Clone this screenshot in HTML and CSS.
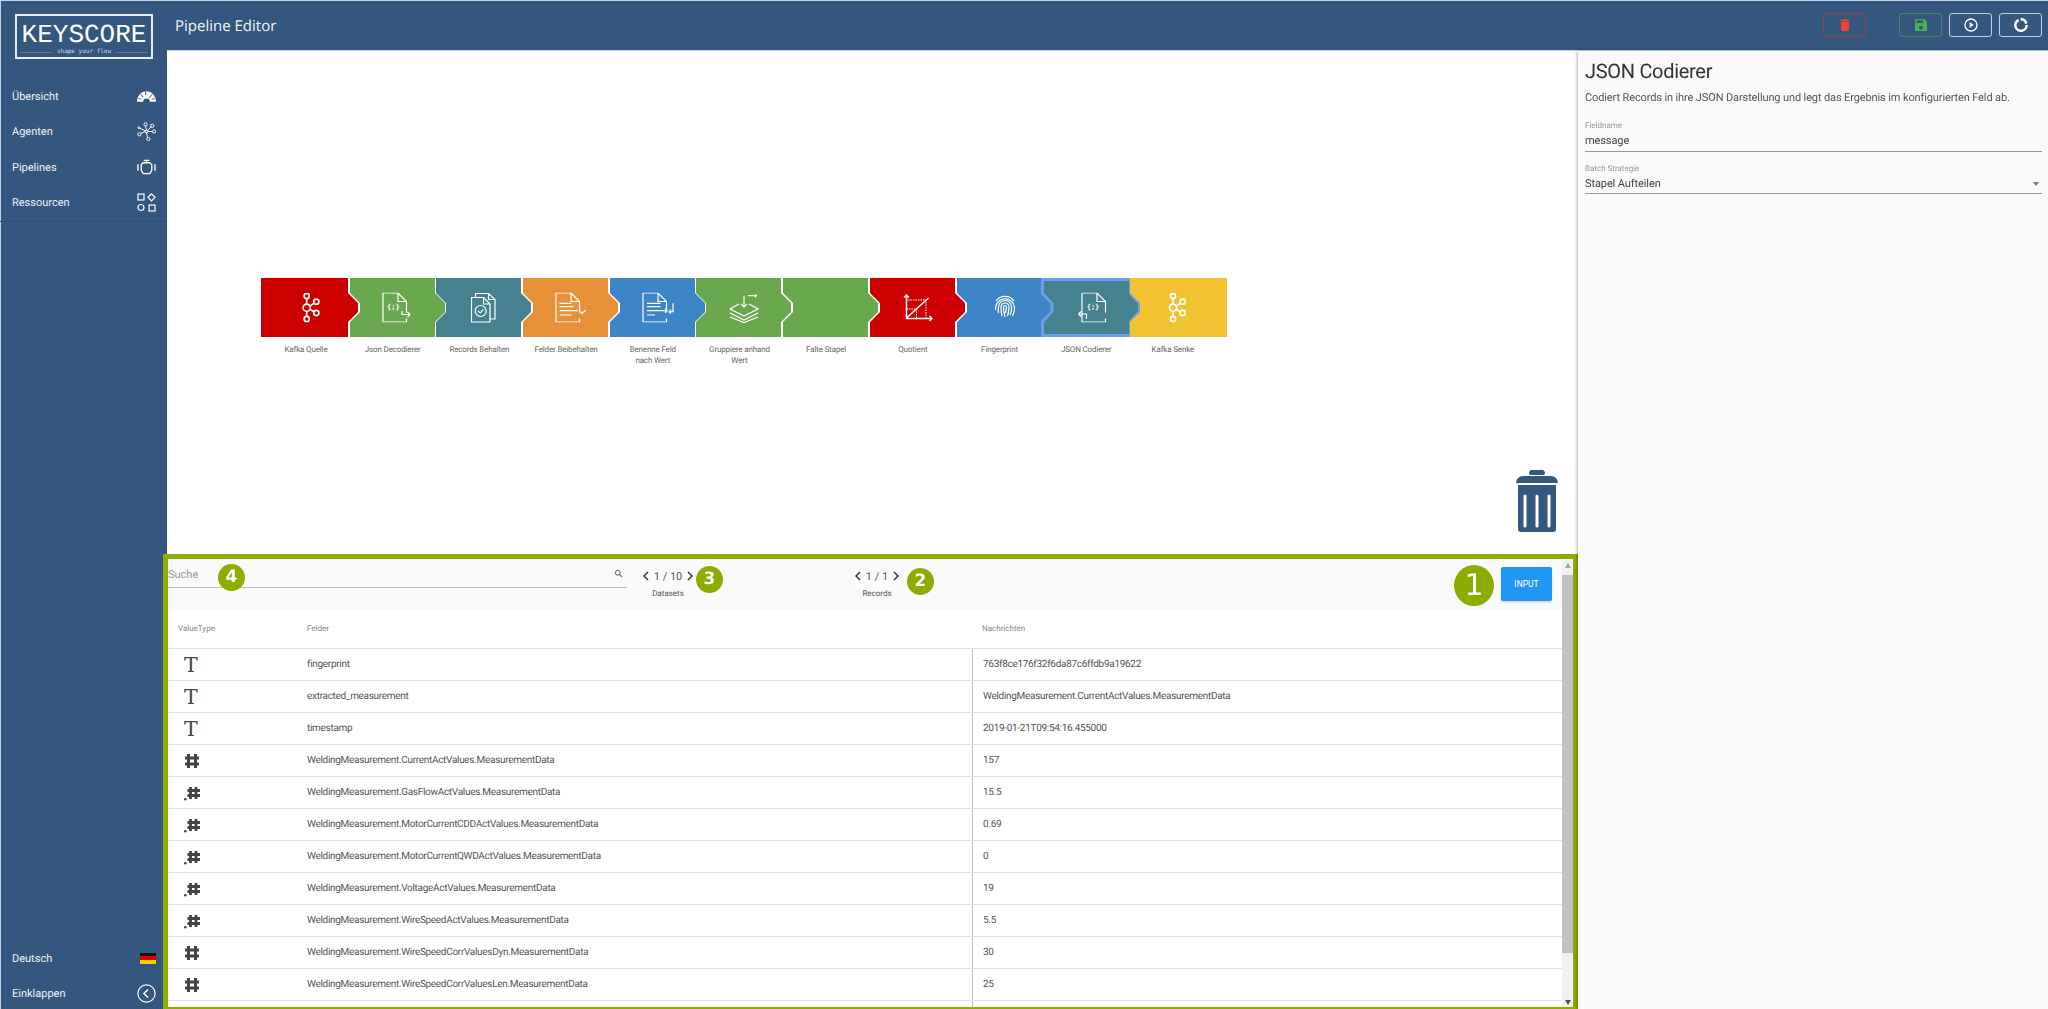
FILE: index.html
```html
<!DOCTYPE html>
<html>
<head>
  <title>Keyscore Pipeline Editor</title>
  <meta charset="UTF-8">
  <link rel="stylesheet" href="styles.css">
</head>
<body>
  <svg class="defs" xmlns="http://www.w3.org/2000/svg">
    <polygon id="mid" points="0,0 85,0 85,15 95,25 95,34 85,44 85,59 0,59 0,44 10,34 10,25 0,15"/>
    <symbol id="i-kafka" viewBox="0 0 30 30">
      <g fill="none" stroke="#fff" stroke-width="1.600">
        <path d="M11 6v5.400M11 18.600V24M14 13.500l4.500-3M14 16.500l4.500 2.500"/>
        <circle cx="11" cy="3.300" r="2.600"/>
        <circle cx="11" cy="15" r="3.600"/>
        <circle cx="11" cy="26.300" r="2.600"/>
        <circle cx="20.600" cy="9" r="2.600"/>
        <circle cx="20.600" cy="20.300" r="2.600"/>
      </g>
    </symbol>
    <symbol id="i-doc" viewBox="0 0 30 30">
      <path d="M3 .5h15l8.500 8.500v11M26.500 26v3.500H3V.5M18 .5V9h8.500" fill="none" stroke="#fff" stroke-width="1.200"/>
    </symbol>
    <symbol id="i-int" viewBox="0 0 16 16">
      <path d="M4.500 1v14M11.500 1v14M1 5h14M1 11h14" fill="none" stroke="#444" stroke-width="3"/>
    </symbol>
    <symbol id="i-float" viewBox="0 0 16 16">
      <circle cx="1.300" cy="14.300" r="1.300" fill="#444"/>
      <path d="M6.500 2v12M12 2v12M3.500 5.500H16M3.500 10.500H16" fill="none" stroke="#444" stroke-width="2.800"/>
    </symbol>
    <symbol id="i-prev" viewBox="0 0 6 10">
      <path d="M5 1L1 5l4 4" fill="none" stroke="#333" stroke-width="1.500"/>
    </symbol>
    <symbol id="i-next" viewBox="0 0 6 10">
      <path d="M1 1l4 4-4 4" fill="none" stroke="#333" stroke-width="1.500"/>
    </symbol>
  </svg>

  <div class="app">
    <aside class="sidebar">
      <div class="logo">
        <div class="logo-name">KEYSCORE</div>
        <div class="logo-tag"><span>shape your flow</span></div>
      </div>
      <nav class="nav">
        <div class="nav-row">Übersicht
          <svg class="nav-icon" viewBox="0 -4.500 20 20"><path d="M0 11C0 5 4.500 0 10 0s10 5 10 11h-6.500a3.500 3.500 0 0 0-7 0z" fill="#fff"/><path d="M4 3l2.500 3.500M1.500 7.500l3 1M16 3l-3.500 4.500M18.500 7.500l-3 1M9 0v4" stroke="#34577f" stroke-width="1"/></svg>
        </div>
        <div class="nav-row">Agenten
          <svg class="nav-icon" viewBox="0 0 20 20" fill="none" stroke="#fff" stroke-width="1"><circle cx="9" cy="2.500" r="1.700"/><circle cx="16" cy="4" r="1.700"/><circle cx="18" cy="10" r="1.700"/><circle cx="2.500" cy="13" r="1.700"/><circle cx="12" cy="18" r="1.700"/><circle cx="2" cy="6" r="1"/><circle cx="10" cy="10" r="1.500"/><path d="M9 4l1 5M15 5l-4 4M16 10h-5M4 12l5-2M11 16l-1-5M3 6.500l6 3"/></svg>
        </div>
        <div class="nav-row">Pipelines
          <svg class="nav-icon" viewBox="0 0 20 20" fill="none" stroke="#fff" stroke-width="1.400"><path d="M1 6.500v7M19 6.500v7M7 2.500h6M10 2.500V5M6.500 5h7l2 2v6l-2 3.500h-7l-2-3.500V7z"/></svg>
        </div>
        <div class="nav-row">Ressourcen
          <svg class="nav-icon" viewBox="0 0 19 19" fill="none" stroke="#fff" stroke-width="1.200"><rect x="1" y="1" width="6" height="6"/><path d="M14.500 0.800l3.500 3.500-3.500 3.500-3.500-3.500z"/><circle cx="4" cy="14.500" r="3"/><rect x="12" y="12" width="6" height="6"/></svg>
        </div>
      </nav>
      <div class="side-foot">
        <div class="nav-row">Deutsch
          <span class="flag"><i class="flag-black"></i><i class="flag-red"></i><i class="flag-gold"></i></span>
        </div>
        <div class="nav-row">Einklappen
          <svg class="nav-icon" viewBox="0 0 19 19" fill="none" stroke="#fff"><circle cx="9.500" cy="9.500" r="8.600" stroke-width="1.200"/><path d="M11 5.500l-4 4 4 4" stroke-width="1.600"/></svg>
        </div>
      </div>
    </aside>

    <div class="main">
      <header class="topbar">
        <div class="page-title">Pipeline Editor</div>
        <div class="top-actions">
          <button class="top-btn btn-red"><svg viewBox="0 0 24 24"><path d="M6 19a2 2 0 0 0 2 2h8a2 2 0 0 0 2-2V7H6zM19 4h-3.500l-1-1h-5l-1 1H5v2h14z" fill="#f44336"/></svg></button>
          <button class="top-btn btn-green"><svg viewBox="0 0 24 24"><path d="M17 3H5a2 2 0 0 0-2 2v14a2 2 0 0 0 2 2h14a2 2 0 0 0 2-2V7zm-5 16a3 3 0 1 1 0-6 3 3 0 0 1 0 6zm3-10H5V5h10z" fill="#4caf50"/></svg></button>
          <button class="top-btn"><svg viewBox="0 0 24 24"><path d="M10 7.500v9l6-4.500zM12 2a10 10 0 1 0 0 20 10 10 0 0 0 0-20zm0 18a8 8 0 1 1 0-16 8 8 0 0 1 0 16z" fill="#fff"/></svg></button>
          <button class="top-btn"><svg viewBox="0 0 24 24" fill="none" stroke="#fff" stroke-width="3.800"><path d="M8.500 4.500A8.500 8.500 0 1 0 20.500 12"/><path d="M11.500 3.500a8.500 8.500 0 0 1 8.500 6.500"/></svg></button>
        </div>
      </header>

      <div class="content">
        <section class="editor">
          <div class="canvas">
            <div class="pipeline">
              <div class="node">
                <svg class="shape" viewBox="0 0 97 59"><polygon class="red" points="0,0 87,0 87,15 97,25 97,34 87,44 87,59 0,59"/><use href="#i-kafka" x="34.700" y="14.700" width="30" height="30"/></svg>
                <div class="node-label">Kafka Quelle</div>
              </div>
              <div class="node">
                <svg class="shape" viewBox="0 0 97 59"><use href="#mid" class="green"/><use href="#i-doc" x="30" y="14.500" width="30" height="30"/><text class="glyph" x="43.300" y="31">{;}</text><path class="ln" d="M52 33v3.500h8M57.500 34l2.500 2.500-2.500 2.500"/></svg>
                <div class="node-label">Json Decodierer</div>
              </div>
              <div class="node">
                <svg class="shape" viewBox="0 0 97 59"><use href="#mid" class="teal"/><path class="ln" d="M39.500 19.500v-4h13l6.500 6v19.500h-5M52.500 15.500v6h6.500"/><path class="ln" d="M35.500 19.500h12l6.500 6.500v18H35.500zM47.500 19.500v6.500h6.500"/><circle class="ln" cx="44.700" cy="33" r="5.500"/><path class="ln" d="M42 33l2 2 3.500-3.500"/></svg>
                <div class="node-label">Records Behalten</div>
              </div>
              <div class="node">
                <svg class="shape" viewBox="0 0 97 59"><use href="#mid" class="orange"/><use href="#i-doc" x="30" y="14.500" width="30" height="30"/><path class="ln" d="M36.500 25.300h12M36.500 28.700h14M36.500 32.700h18M36.500 37h12M57 33.500l2 2 4-3.500"/></svg>
                <div class="node-label">Felder Beibehalten</div>
              </div>
              <div class="node">
                <svg class="shape" viewBox="0 0 97 59"><use href="#mid" class="blue"/><use href="#i-doc" x="30" y="14.500" width="30" height="30"/><path class="ln" d="M37 25.300h13.500M37 28.700h13.500M37 32.700h20M37 37h8M55 30.700l2 2-2 2M63 25.300v8.400h-4M61 31.700l-2 2 2 2"/></svg>
                <div class="node-label">Benenne Feld<br>nach Wert</div>
              </div>
              <div class="node">
                <svg class="shape" viewBox="0 0 97 59"><use href="#mid" class="green"/><path class="ln" d="M34 31l9-5M53 26l9 5-14 7-14-7M34 35l14 7 14-7M34 39l14 5.500L62 39M48 18v11M45 26l3 3 3-3M52 17.700h5"/><path d="M57 16.700h4.500l-2.200 3z" fill="#fff"/></svg>
                <div class="node-label">Gruppiere anhand<br>Wert</div>
              </div>
              <div class="node">
                <svg class="shape" viewBox="0 0 97 59"><use href="#mid" class="green"/></svg>
                <div class="node-label">Falte Stapel</div>
              </div>
              <div class="node">
                <svg class="shape" viewBox="0 0 97 59"><use href="#mid" class="red"/><path class="ln axis" d="M36.500 17v23.500H62M34 19.500l2.500-2.500 2.500 2.500M59.500 38l2.500 2.500-2.500 2.500M36.500 40l22-20"/><path class="ln dots" d="M38 22h18v18M36.500 31h10v9"/></svg>
                <div class="node-label">Quotient</div>
              </div>
              <div class="node">
                <svg class="shape" viewBox="0 0 97 59"><use href="#mid" class="blue"/><g class="ln" transform="translate(48 29)"><path d="M-9-6A11 11 0 0 1 9-6"/><path d="M-9.500 3A9.500 9.500 0 0 1 9.500 0V2C9.500 5 8.500 7 7.500 9"/><path d="M-6.500 6C-7 4-7 2-6.500 0A6.500 6.500 0 0 1 6.500 0V2C6.500 4 6 6 5 8"/><path d="M-3 9C-4 6-4 3-4 0A4 4 0 0 1 4 0C4 3 3.500 6 2.500 9"/><path d="M0 10C-1 6-1.500 3-1.500 0A1.500 1.500 0 0 1 1.500 0C1.500 2 1 4 .5 6"/></g></svg>
                <div class="node-label">Fingerprint</div>
              </div>
              <div class="node">
                <svg class="shape" viewBox="0 0 97 59"><polygon class="teal sel" points="-0.500,1.500 87.500,1.500 87.500,15.500 96.500,25.500 96.500,33.500 87.500,43.500 87.500,57.500 -0.500,57.500 -0.500,43.500 9,33.500 9,25.500 -0.500,15.500"/><use href="#i-doc" x="36" y="14.500" width="30" height="30"/><text class="glyph" x="50" y="31">{;}</text><path class="ln" d="M35.500 36h8v5M38 33.500l-2.500 2.500 2.500 2.500"/></svg>
                <div class="node-label">JSON Codierer</div>
              </div>
              <div class="node">
                <svg class="shape" viewBox="0 0 97 59"><polygon class="yellow" points="0,0 97,0 97,59 0,59 0,44 10,34 10,25 0,15"/><use href="#i-kafka" x="32" y="14.700" width="30" height="30"/></svg>
                <div class="node-label">Kafka Senke</div>
              </div>
            </div>
            <svg class="trash" viewBox="0 0 42 64"><path d="M14 7a3 3 0 0 1 3-5h8a3 3 0 0 1 3 5zM0 15a7 7 0 0 1 7-7h28a7 7 0 0 1 7 7z" fill="#34577f"/><path d="M2 17h38v44a3 3 0 0 1-3 3H5a3 3 0 0 1-3-3z" fill="#34577f"/><path d="M9 28v30M21 28v30M33 28v30" stroke="#fff" stroke-width="3" stroke-linecap="round"/></svg>
          </div>

          <div class="preview">
            <div class="preview-main">
              <div class="toolbar">
                <div class="search">
                  <span class="search-text">Suche</span>
                  <svg class="search-icon" viewBox="0 0 24 24"><circle cx="10" cy="10" r="6.500" fill="none" stroke="#555" stroke-width="2.500"/><path d="M15 15l6 6" stroke="#555" stroke-width="3"/></svg>
                </div>
                <div class="pager pager-data">
                  <div class="pager-nums"><svg class="chev"><use href="#i-prev"/></svg>1 / 10<svg class="chev"><use href="#i-next"/></svg></div>
                  <div class="pager-name">Datasets</div>
                </div>
                <div class="pager pager-rec">
                  <div class="pager-nums"><svg class="chev"><use href="#i-prev"/></svg>1 / 1<svg class="chev"><use href="#i-next"/></svg></div>
                  <div class="pager-name">Records</div>
                </div>
                <button class="input-btn">INPUT</button>
              </div>
              <div class="table-head">
                <div class="col-type">ValueType</div>
                <div class="col-name">Felder</div>
                <div class="col-value">Nachrichten</div>
              </div>
              <div class="row"><div class="col-type type-t">T</div><div class="col-name">fingerprint</div><div class="col-value">763f8ce176f32f6da87c6ffdb9a19622</div></div>
              <div class="row"><div class="col-type type-t">T</div><div class="col-name">extracted_measurement</div><div class="col-value">WeldingMeasurement.CurrentActValues.MeasurementData</div></div>
              <div class="row"><div class="col-type type-t">T</div><div class="col-name">timestamp</div><div class="col-value">2019-01-21T09:54:16.455000</div></div>
              <div class="row"><div class="col-type"><svg class="type-n"><use href="#i-int"/></svg></div><div class="col-name">WeldingMeasurement.CurrentActValues.MeasurementData</div><div class="col-value">157</div></div>
              <div class="row"><div class="col-type"><svg class="type-n"><use href="#i-float"/></svg></div><div class="col-name">WeldingMeasurement.GasFlowActValues.MeasurementData</div><div class="col-value">15.5</div></div>
              <div class="row"><div class="col-type"><svg class="type-n"><use href="#i-float"/></svg></div><div class="col-name">WeldingMeasurement.MotorCurrentCDDActValues.MeasurementData</div><div class="col-value">0.69</div></div>
              <div class="row"><div class="col-type"><svg class="type-n"><use href="#i-float"/></svg></div><div class="col-name">WeldingMeasurement.MotorCurrentQWDActValues.MeasurementData</div><div class="col-value">0</div></div>
              <div class="row"><div class="col-type"><svg class="type-n"><use href="#i-float"/></svg></div><div class="col-name">WeldingMeasurement.VoltageActValues.MeasurementData</div><div class="col-value">19</div></div>
              <div class="row"><div class="col-type"><svg class="type-n"><use href="#i-float"/></svg></div><div class="col-name">WeldingMeasurement.WireSpeedActValues.MeasurementData</div><div class="col-value">5.5</div></div>
              <div class="row"><div class="col-type"><svg class="type-n"><use href="#i-int"/></svg></div><div class="col-name">WeldingMeasurement.WireSpeedCorrValuesDyn.MeasurementData</div><div class="col-value">30</div></div>
              <div class="row"><div class="col-type"><svg class="type-n"><use href="#i-int"/></svg></div><div class="col-name">WeldingMeasurement.WireSpeedCorrValuesLen.MeasurementData</div><div class="col-value">25</div></div>
              <div class="row"><div class="col-type"></div><div class="col-name"></div><div class="col-value"></div></div>
            </div>
            <div class="scrollbar">
              <div class="scroll-up"></div>
              <div class="scroll-thumb"></div>
              <div class="scroll-down"></div>
            </div>
            <div class="frame"></div>
            <div class="mark mark-1">1</div>
            <div class="mark mark-2">2</div>
            <div class="mark mark-3">3</div>
            <div class="mark mark-4">4</div>
          </div>
        </section>

        <aside class="panel">
          <h2 class="panel-title">JSON Codierer</h2>
          <p class="panel-desc">Codiert Records in ihre JSON Darstellung und legt das Ergebnis im konfigurierten Feld ab.</p>
          <div class="field">
            <div class="field-label">Fieldname</div>
            <div class="field-value">message</div>
          </div>
          <div class="field">
            <div class="field-label">Batch Strategie</div>
            <div class="field-value">Stapel Aufteilen<span class="caret"></span></div>
          </div>
        </aside>
      </div>
    </div>
  </div>
</body>
</html>
```

FILE: styles.css
```css
html, body {
  margin: 0;
  height: 100%;
  overflow: hidden;
}
body {
  font-family: Roboto, "Liberation Sans", sans-serif;
  text-rendering: geometricPrecision;
  background-color: #fff;
  color: #333;
}
.defs {
  position: absolute;
  width: 0;
  height: 0;
}
.app {
  display: flex;
  height: 1009px;
}
.sidebar {
  flex: 0 0 167px;
  display: flex;
  flex-direction: column;
  background-color: #34577f;
  box-shadow: inset 1px 1px 0 #c5d0dc;
  color: #eef2f6;
}
.logo {
  margin: 14px 14px 0 15px;
  height: 45px;
  box-sizing: border-box;
  border: 2px solid #e8edf2;
  text-align: center;
}
.logo-name {
  font-family: "Liberation Mono", monospace;
  font-size: 26px;
  line-height: 26px;
  margin-top: 6px;
  color: #fff;
}
.logo-tag {
  font-family: "DejaVu Sans Mono", monospace;
  font-size: 6px;
  line-height: 8px;
  margin: 0 3px;
  color: #cfd8e2;
  background: linear-gradient(#5d7a9b, #5d7a9b) center / 100% 1px no-repeat;
}
.logo-tag span {
  background-color: #34577f;
  padding: 0 5px;
}
.nav {
  margin-top: 20px;
  padding-bottom: 1px;
  border-bottom: 1px solid #2f4f74;
}
.nav-row {
  display: flex;
  align-items: center;
  justify-content: space-between;
  height: 35.300px;
  padding: 0 11px 0 12px;
  font-size: 11px;
}
.nav-icon {
  width: 19px;
  height: 19px;
}
.flag {
  display: flex;
  flex-direction: column;
  width: 16px;
  height: 11px;
}
.flag i {
  flex: 1;
}
.flag-black { background-color: #111; }
.flag-red { background-color: #d00; }
.flag-gold { background-color: #fc0; }
.side-foot {
  margin-top: auto;
  margin-bottom: -2px;
}
.main {
  flex: 1;
  display: flex;
  flex-direction: column;
  min-width: 0;
}
.topbar {
  flex: 0 0 51px;
  display: flex;
  align-items: center;
  justify-content: space-between;
  box-sizing: border-box;
  padding: 0 6px 0 8px;
  background-color: #34577f;
  box-shadow: inset 0 1px 0 #c5d0dc;
  border-bottom: 1px solid #c9d8e6;
}
.page-title {
  font-family: "Open Sans", sans-serif;
  font-size: 15px;
  margin-top: 2px;
  color: #f2f5f8;
}
.top-actions {
  display: flex;
  gap: 7px;
}
.top-btn {
  width: 43px;
  height: 24px;
  padding: 0;
  display: flex;
  align-items: center;
  justify-content: center;
  background: transparent;
  border: 1px solid #c6d2df;
  border-radius: 3px;
}
.top-btn svg {
  width: 16px;
  height: 16px;
}
.btn-red {
  margin-right: 26px;
  border-color: #a33a44;
}
.btn-green {
  border-color: #3f8a55;
}
.content {
  flex: 1;
  display: flex;
  min-height: 0;
}
.editor {
  flex: 1;
  display: flex;
  flex-direction: column;
  min-width: 0;
}
.canvas {
  flex: 0 0 503px;
  position: relative;
  box-sizing: border-box;
  padding: 227px 0 0 94px;
}
.pipeline {
  display: flex;
}
.node {
  flex: 0 0 86.700px;
  min-width: 0;
}
.shape {
  display: block;
  width: 97px;
  height: 59px;
  overflow: visible;
}
.node + .node .shape {
  margin-left: 2px;
}
.red { fill: #cc0000; }
.green { fill: #6aa84f; }
.teal { fill: #45818e; }
.orange { fill: #e69138; }
.blue { fill: #3d85c6; }
.yellow { fill: #f1c232; }
.sel {
  stroke: #6d9eeb;
  stroke-width: 3;
}
.ln {
  fill: none;
  stroke: #fff;
  stroke-width: 1.200;
}
.axis {
  stroke-width: 1.500;
}
.dots {
  stroke-dasharray: 1.500 1;
  stroke-width: 1;
}
.glyph {
  font-family: "DejaVu Sans Mono", monospace;
  font-size: 7px;
  font-weight: bold;
  text-anchor: middle;
  fill: #fff;
}
.node-label {
  width: 84px;
  margin: 7px 0 0 3px;
  font-size: 8px;
  letter-spacing: -0.150px;
  line-height: 11px;
  text-align: center;
  color: #666;
}
.trash {
  position: absolute;
  right: 20px;
  top: 417px;
  width: 42px;
  height: 64px;
}
.preview {
  flex: 1;
  display: flex;
  position: relative;
  min-height: 0;
  margin-left: 1px;
  padding-right: 5px;
  overflow: hidden;
}
.preview-main {
  flex: 1;
  min-width: 0;
  padding-top: 5px;
}
.toolbar {
  height: 51px;
  display: flex;
  background-color: #fafafa;
}
.search {
  width: 459px;
  height: 28px;
  display: flex;
  align-items: center;
  justify-content: space-between;
  border-bottom: 1px solid #bbb;
}
.search-text {
  padding-top: 3px;
  font-size: 11px;
  color: #999;
}
.search-icon {
  width: 9px;
  height: 9px;
  margin-right: 4px;
}
.pager {
  width: 70px;
  text-align: center;
  color: #555;
}
.pager-nums {
  display: flex;
  align-items: center;
  justify-content: center;
  gap: 5px;
  height: 14px;
  margin-top: 10px;
  font-size: 11px;
}
.chev {
  width: 6px;
  height: 10px;
}
.pager-name {
  margin-top: 6px;
  font-size: 8px;
}
.pager-data {
  margin-left: 6px;
}
.pager-rec {
  margin-left: 139px;
}
.input-btn {
  width: 51px;
  height: 34px;
  margin: 8px 10px 0 auto;
  padding: 0;
  border: 0;
  border-radius: 2px;
  background-color: #2196f3;
  box-shadow: 0 1px 2px rgba(0,0,0,0.2);
  color: #fff;
  font-family: inherit;
  font-size: 8.500px;
}
.table-head {
  display: flex;
  height: 39px;
  padding-bottom: 1px;
  align-items: center;
  font-size: 8px;
  color: #888;
  border-bottom: 1px solid #e3e3e3;
  box-sizing: border-box;
}
.row {
  display: flex;
  height: 32px;
  box-sizing: border-box;
  align-items: center;
  font-size: 10px;
  letter-spacing: -0.300px;
  color: #555;
  border-bottom: 1px solid #e3e3e3;
}
.col-type {
  flex: 0 0 139px;
  padding-left: 10px;
  box-sizing: border-box;
}
.col-name {
  flex: 0 0 665px;
  box-sizing: border-box;
  height: 100%;
  display: flex;
  align-items: center;
}
.col-value {
  flex: 1;
  height: 100%;
  display: flex;
  align-items: center;
  padding-left: 10px;
}
.row .col-value {
  border-left: 1px solid #bbb;
}
.row .col-type {
  padding-left: 16px;
}
.type-t {
  font-family: "DejaVu Serif", serif;
  font-size: 20.500px;
  color: #444;
}
.type-n {
  display: block;
  width: 16px;
  height: 16px;
}
.scrollbar {
  flex: 0 0 11px;
  display: flex;
  flex-direction: column;
  margin-top: 5px;
  background-color: #f1f1f1;
}
.scroll-up, .scroll-down {
  width: 0;
  height: 0;
  margin: 4px auto;
  border-left: 3.500px solid transparent;
  border-right: 3.500px solid transparent;
}
.scroll-up {
  border-bottom: 5px solid #a3a3a3;
}
.scroll-down {
  margin-top: auto;
  border-top: 5px solid #505050;
}
.scroll-thumb {
  height: 378px;
  margin-top: 3px;
  background-color: #c1c1c1;
}
.frame {
  position: fixed;
  left: 163px;
  top: 554px;
  width: 1415px;
  height: 455px;
  box-sizing: border-box;
  border: 5px solid #8bad00;
  border-bottom-width: 2px;
  pointer-events: none;
}
.mark {
  position: fixed;
  width: 27px;
  height: 27px;
  border-radius: 50%;
  background-color: #8bad00;
  color: #fff;
  font-family: "DejaVu Sans", sans-serif;
  font-size: 17px;
  font-weight: bold;
  line-height: 27px;
  text-align: center;
}
.mark-1 {
  left: 1454px;
  top: 565px;
  width: 40px;
  height: 41px;
  font-size: 30px;
  font-weight: normal;
  line-height: 41px;
}
.mark-2 { left: 907px; top: 568px; }
.mark-3 { left: 696px; top: 566px; }
.mark-4 { left: 218px; top: 564px; }
.panel {
  flex: 0 0 470px;
  box-sizing: border-box;
  padding: 8px 6px 0 7px;
  background-color: #fafafa;
  box-shadow: -1px 0 3px rgba(0,0,0,0.3);
  position: relative;
}
.panel-title {
  margin: 0;
  font-size: 20px;
  font-weight: 400;
  letter-spacing: -0.300px;
  line-height: 24px;
  color: #333;
}
.panel-desc {
  margin: 7px 0 14px;
  font-size: 11px;
  letter-spacing: -0.120px;
  line-height: 16px;
  color: #555;
}
.field {
  margin-bottom: 11px;
  border-bottom: 1px solid #999;
  padding-bottom: 1.500px;
}
.field-label {
  margin-bottom: 1px;
  font-size: 8px;
  line-height: 11px;
  color: #999;
}
.field-value {
  position: relative;
  font-size: 11px;
  letter-spacing: -0.100px;
  line-height: 17px;
  color: #444;
}
.caret {
  position: absolute;
  right: 3px;
  top: 7px;
  border-left: 3.500px solid transparent;
  border-right: 3.500px solid transparent;
  border-top: 4px solid #777;
}
```
